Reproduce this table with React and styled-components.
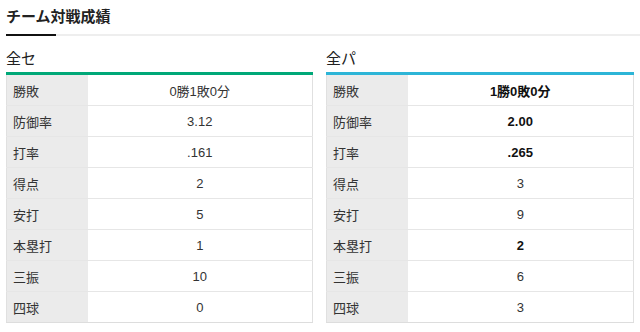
import React from "react";
import styled, { createGlobalStyle } from "styled-components";

const GlobalStyle = createGlobalStyle`
  body {
    margin: 0;
    background: #fff;
    font-family: "Liberation Sans", "Noto Sans CJK JP", sans-serif;
    color: #333;
  }
`;

const Page = styled.div`
  width: 640px;
  padding: 0 0 0 6px;
  box-sizing: border-box;
`;

const Heading = styled.h2`
  position: relative;
  margin: 0;
  padding: 7px 0 0;
  height: 27px;
  font-size: 15px;
  line-height: 20px;
  font-weight: bold;
  color: #222;
  border-bottom: 2px solid #eeeeee;

  &::after {
    content: "";
    position: absolute;
    left: 0;
    bottom: -2px;
    width: 50px;
    height: 2px;
    background: #111;
  }
`;

const Columns = styled.div`
  display: grid;
  grid-template-columns: 307px 308px;
  column-gap: 13px;
  margin-top: 13px;
`;

const League = styled.section``;

const LeagueName = styled.h3`
  margin: 0;
  height: 23px;
  font-size: 15px;
  line-height: 20px;
  font-weight: normal;
  color: #222;
`;

const Bar = styled.div`
  height: 3px;
  background: ${(p) => p.$color};
`;

const Table = styled.table`
  width: 100%;
  border-collapse: collapse;
  border: 1px solid #e0e0e0;
  border-top: none;
  font-size: 13px;
`;

const Row = styled.tr`
  border-bottom: 1px solid #e6e6e6;

  &:last-child {
    border-bottom: 1px solid #dddddd;
  }
`;

const Label = styled.th`
  box-sizing: border-box;
  width: 81px;
  height: 30px;
  padding: 0 0 0 6px;
  background: #ebebeb;
  text-align: left;
  font-weight: normal;
  color: #333;
`;

const Value = styled.td`
  height: 30px;
  padding: 0;
  text-align: center;
  font-weight: ${(p) => (p.$win ? "bold" : "normal")};
  color: ${(p) => (p.$win ? "#111" : "#333")};
`;

const labels = ["勝敗", "防御率", "打率", "得点", "安打", "本塁打", "三振", "四球"];

const leagues = [
  {
    name: "全セ",
    color: "#00a878",
    values: ["0勝1敗0分", "3.12", ".161", "2", "5", "1", "10", "0"],
    wins: [],
  },
  {
    name: "全パ",
    color: "#2db5d7",
    values: ["1勝0敗0分", "2.00", ".265", "3", "9", "2", "6", "3"],
    wins: [0, 1, 2, 5],
  },
];

export default function App() {
  return (
    <>
      <GlobalStyle />
      <Page>
        <Heading>チーム対戦成績</Heading>
        <Columns>
          {leagues.map((lg) => (
            <League key={lg.name}>
              <LeagueName>{lg.name}</LeagueName>
              <Bar $color={lg.color} />
              <Table>
                <tbody>
                  {labels.map((label, i) => (
                    <Row key={label}>
                      <Label>{label}</Label>
                      <Value $win={lg.wins.includes(i)}>{lg.values[i]}</Value>
                    </Row>
                  ))}
                </tbody>
              </Table>
            </League>
          ))}
        </Columns>
      </Page>
    </>
  );
}
